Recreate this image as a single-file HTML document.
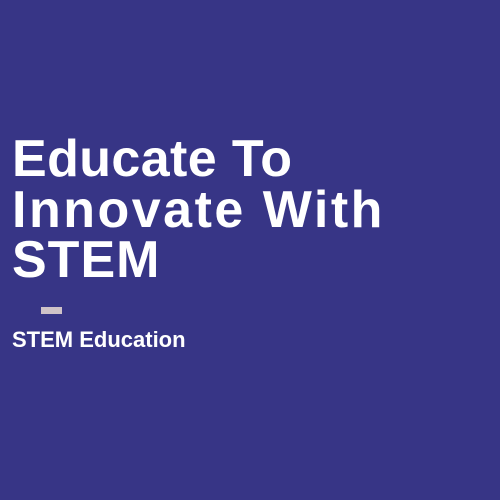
<!DOCTYPE html>
<html><head><meta charset="utf-8"><style>
html,body{margin:0;padding:0;}
body{width:500px;height:500px;background:#373586;position:relative;overflow:hidden;font-family:"Liberation Sans",sans-serif;color:#fff;}
h1{position:absolute;left:12px;top:134px;margin:0;font-size:52px;line-height:50.5px;font-weight:bold;letter-spacing:1px;white-space:nowrap;}
.l1{letter-spacing:0.4px}.l2{letter-spacing:2.5px}
.dash{position:absolute;left:41px;top:307px;width:21px;height:7px;background:#cfc3c8;}
.sub{position:absolute;left:12px;top:329px;font-size:22px;line-height:22px;font-weight:bold;letter-spacing:0;white-space:nowrap;}
</style></head><body>
<h1><span class="l1">Educate To</span><br><span class="l2">Innovate With</span><br>STEM</h1>
<div class="dash"></div>
<div class="sub">STEM Education</div>
</body></html>
